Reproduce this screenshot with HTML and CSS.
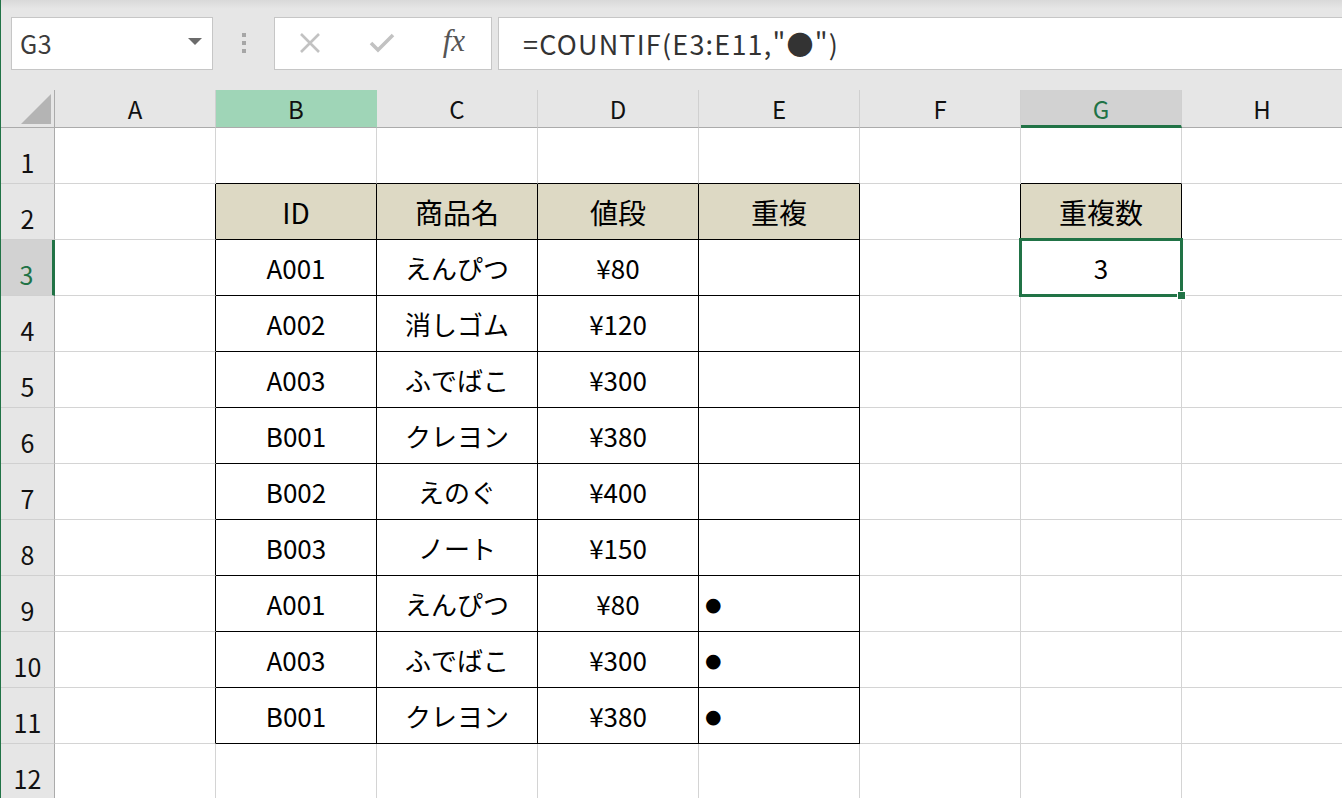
FILE: index.html
```html
<!DOCTYPE html>
<html lang="ja">
  <head>
    <meta charset="UTF-8" />
    <meta name="viewport" content="width=device-width, initial-scale=1.0" />
    <title>COUNTIF</title>
    <link rel="stylesheet" href="styles.css">
  </head>
  <body>
    <div class="window">
      <div class="toolbar">
        <div class="nameBox">
          <span class="nameText">G3</span>
          <span class="arrow"></span>
        </div>
        <div class="dots"><i></i><i></i><i></i></div>
        <div class="fxButtons">
          <svg class="icon" width="24" height="24" viewBox="0 0 24 24">
            <path d="M3 3 L21 21 M21 3 L3 21" stroke="#c2c2c2" stroke-width="2.6" fill="none" />
          </svg>
          <svg class="icon" width="28" height="24" viewBox="0 0 28 24">
            <path d="M3 12 L10 19 L25 4" stroke="#c2c2c2" stroke-width="3.6" fill="none" />
          </svg>
          <span class="fx">fx</span>
        </div>
        <div class="formula">=COUNTIF(E3:E11,"●")</div>
      </div>

      <div class="sheet">
        <div class="corner"><span class="cornerTri"></span></div>
        <div class="colHead">A</div>
        <div class="colHead colGreen">B</div>
        <div class="colHead">C</div>
        <div class="colHead">D</div>
        <div class="colHead">E</div>
        <div class="colHead">F</div>
        <div class="colHead colActive">G</div>
        <div class="colHead">H</div>

        <!-- row 1 -->
        <div class="rowHead">1</div>
        <div class="cell"></div>
        <div class="cell above"></div>
        <div class="cell above"></div>
        <div class="cell above"></div>
        <div class="cell above"></div>
        <div class="cell"></div>
        <div class="cell above"></div>
        <div class="cell"></div>

        <!-- row 2 -->
        <div class="rowHead">2</div>
        <div class="cell leftOf"></div>
        <div class="cell tbl head">ID</div>
        <div class="cell tbl head">商品名</div>
        <div class="cell tbl head">値段</div>
        <div class="cell tbl head">重複</div>
        <div class="cell leftOf"></div>
        <div class="cell tbl head">重複数</div>
        <div class="cell"></div>

        <!-- row 3 -->
        <div class="rowHead rowActive">3</div>
        <div class="cell leftOf"></div>
        <div class="cell tbl">A001</div>
        <div class="cell tbl">えんぴつ</div>
        <div class="cell tbl">¥80</div>
        <div class="cell tbl"></div>
        <div class="cell"></div>
        <div class="cell selected">3<span class="handle"></span></div>
        <div class="cell"></div>

        <!-- row 4 -->
        <div class="rowHead">4</div>
        <div class="cell leftOf"></div>
        <div class="cell tbl">A002</div>
        <div class="cell tbl">消しゴム</div>
        <div class="cell tbl">¥120</div>
        <div class="cell tbl"></div>
        <div class="cell"></div>
        <div class="cell"></div>
        <div class="cell"></div>

        <!-- row 5 -->
        <div class="rowHead">5</div>
        <div class="cell leftOf"></div>
        <div class="cell tbl">A003</div>
        <div class="cell tbl">ふでばこ</div>
        <div class="cell tbl">¥300</div>
        <div class="cell tbl"></div>
        <div class="cell"></div>
        <div class="cell"></div>
        <div class="cell"></div>

        <!-- row 6 -->
        <div class="rowHead">6</div>
        <div class="cell leftOf"></div>
        <div class="cell tbl">B001</div>
        <div class="cell tbl">クレヨン</div>
        <div class="cell tbl">¥380</div>
        <div class="cell tbl"></div>
        <div class="cell"></div>
        <div class="cell"></div>
        <div class="cell"></div>

        <!-- row 7 -->
        <div class="rowHead">7</div>
        <div class="cell leftOf"></div>
        <div class="cell tbl">B002</div>
        <div class="cell tbl">えのぐ</div>
        <div class="cell tbl">¥400</div>
        <div class="cell tbl"></div>
        <div class="cell"></div>
        <div class="cell"></div>
        <div class="cell"></div>

        <!-- row 8 -->
        <div class="rowHead">8</div>
        <div class="cell leftOf"></div>
        <div class="cell tbl">B003</div>
        <div class="cell tbl">ノート</div>
        <div class="cell tbl">¥150</div>
        <div class="cell tbl"></div>
        <div class="cell"></div>
        <div class="cell"></div>
        <div class="cell"></div>

        <!-- row 9 -->
        <div class="rowHead">9</div>
        <div class="cell leftOf"></div>
        <div class="cell tbl">A001</div>
        <div class="cell tbl">えんぴつ</div>
        <div class="cell tbl">¥80</div>
        <div class="cell tbl mark">●</div>
        <div class="cell"></div>
        <div class="cell"></div>
        <div class="cell"></div>

        <!-- row 10 -->
        <div class="rowHead">10</div>
        <div class="cell leftOf"></div>
        <div class="cell tbl">A003</div>
        <div class="cell tbl">ふでばこ</div>
        <div class="cell tbl">¥300</div>
        <div class="cell tbl mark">●</div>
        <div class="cell"></div>
        <div class="cell"></div>
        <div class="cell"></div>

        <!-- row 11 -->
        <div class="rowHead">11</div>
        <div class="cell leftOf"></div>
        <div class="cell tbl">B001</div>
        <div class="cell tbl">クレヨン</div>
        <div class="cell tbl">¥380</div>
        <div class="cell tbl mark">●</div>
        <div class="cell"></div>
        <div class="cell"></div>
        <div class="cell"></div>

        <!-- row 12 -->
        <div class="rowHead">12</div>
        <div class="cell"></div>
        <div class="cell"></div>
        <div class="cell"></div>
        <div class="cell"></div>
        <div class="cell"></div>
        <div class="cell"></div>
        <div class="cell"></div>
        <div class="cell"></div>
      </div>
    </div>
  </body>
</html>
```

FILE: styles.css
```css
* {
  margin: 0;
  padding: 0;
  box-sizing: border-box;
}

body {
  width: 1342px;
  height: 798px;
  overflow: hidden;
  background: #ffffff;
  font-family: "Noto Sans CJK JP", "Noto Sans", sans-serif;
  color: #000;
}

.window {
  height: 798px;
  border-left: 1px solid #217346;
  overflow: hidden;
}

/* formula bar */
.toolbar {
  display: flex;
  align-items: center;
  height: 90px;
  padding: 0 0 4px 10px;
  background: linear-gradient(#d9d9d9 0px, #e6e6e6 9px, #e6e6e6 100%);
}

.nameBox {
  display: flex;
  align-items: center;
  justify-content: space-between;
  width: 202px;
  height: 53px;
  padding: 0 10px 0 8px;
  background: #fff;
  border: 1px solid #c6c6c6;
}

.nameText {
  font-size: 25px;
  color: #3c3c3c;
  letter-spacing: 0.5px;
}

.arrow {
  width: 0;
  height: 0;
  border-left: 7px solid transparent;
  border-right: 7px solid transparent;
  border-top: 7px solid #6b6b6b;
  margin-top: -4px;
}

.dots {
  display: flex;
  flex-direction: column;
  gap: 4px;
  width: 61px;
  align-items: center;
}

.dots i {
  display: block;
  width: 4px;
  height: 4px;
  background: #a6a6a6;
}

.fxButtons {
  display: flex;
  align-items: center;
  justify-content: space-between;
  width: 218px;
  height: 53px;
  padding: 0 26px 0 23px;
  background: #fff;
  border: 1px solid #c6c6c6;
}

.fx {
  font-family: "Liberation Serif", "DejaVu Serif", serif;
  font-style: italic;
  font-size: 31px;
  color: #555;
  margin-top: -4px;
}

.formula {
  flex: 1;
  height: 53px;
  margin-left: 6px;
  padding: 0 0 0 24px;
  display: flex;
  align-items: center;
  background: #fff;
  border: 1px solid #c6c6c6;
  border-right: none;
  font-size: 27px;
  letter-spacing: 1.2px;
  color: #333;
}

/* sheet grid */
.sheet {
  display: grid;
  grid-template-columns: 54px repeat(8, 161px);
  grid-template-rows: 38px repeat(12, 56px);
}

.corner {
  position: relative;
  background: #e6e6e6;
  border-right: 1px solid #ababab;
  border-bottom: 1px solid #ababab;
}

.cornerTri {
  position: absolute;
  right: 3px;
  bottom: 3px;
  width: 0;
  height: 0;
  border-left: 30px solid transparent;
  border-bottom: 30px solid #b4b4b4;
}

.colHead {
  display: flex;
  align-items: center;
  justify-content: center;
  background: #e6e6e6;
  border-right: 1px solid #d0d0d0;
  border-bottom: 1px solid #ababab;
  font-size: 24px;
  color: #111;
}

.colGreen {
  background: #9fd5b7;
  border-right-color: #9fd5b7;
}

.colActive {
  background: #d2d2d2;
  color: #217346;
  border-bottom: 3px solid #217346;
  padding-top: 2px;
}

.rowHead {
  display: flex;
  align-items: flex-end;
  justify-content: center;
  padding-bottom: 3px;
  background: #e6e6e6;
  border-right: 1px solid #ababab;
  border-bottom: 1px solid #d0d0d0;
  font-size: 25px;
  color: #111;
}

.rowActive {
  background: #d2d2d2;
  color: #217346;
  border-right: 3px solid #217346;
}

.cell {
  display: flex;
  align-items: center;
  justify-content: center;
  border-right: 1px solid #d4d4d4;
  border-bottom: 1px solid #d4d4d4;
  font-size: 26px;
}

.above {
  border-bottom-color: #000;
}

.leftOf {
  border-right-color: #000;
}

.tbl {
  border-right-color: #000;
  border-bottom-color: #000;
}

.head {
  background: #ddd9c4;
  font-size: 28px;
}

.mark {
  justify-content: flex-start;
  padding-left: 6px;
  font-family: "DejaVu Sans", sans-serif;
  font-size: 19px;
}

.selected {
  position: relative;
  margin: -2px -1px -1px -2px;
  border: 3px solid #217346;
}

.handle {
  position: absolute;
  right: -6px;
  bottom: -6px;
  width: 9px;
  height: 9px;
  background: #217346;
  border: 1px solid #fff;
}
```
